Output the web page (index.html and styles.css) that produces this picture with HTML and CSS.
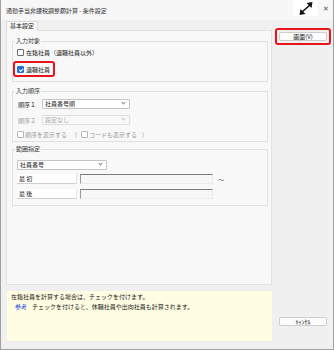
FILE: index.html
```html
<!DOCTYPE html>
<html lang="ja">
<head>
  <meta charset="UTF-8">
  <meta name="viewport" content="width=device-width, initial-scale=1.0">
  <title>条件設定</title>
  <link rel="stylesheet" href="styles.css">
</head>
<body>
  <div class="window">
    <div class="titlebar">
      <span class="title">通勤手当非課税調整額計算 - 条件設定</span>
      <span class="expand">
        <svg width="14" height="13" viewBox="0 0 14 13">
          <line x1="3" y1="10" x2="11" y2="3" stroke="#111" stroke-width="1.6"/>
          <polygon points="13.5,0 7.5,1 12.5,6" fill="#111"/>
          <polygon points="0.5,13 1.5,7 6.5,12" fill="#111"/>
        </svg>
      </span>
      <span class="close">✕</span>
    </div>

    <div class="content">
      <div class="main">
        <div class="tab">基本設定</div>
        <div class="panel">

          <fieldset class="group group-target">
            <legend>入力対象</legend>
            <label class="check"><span class="box"></span>在籍社員（退職社員以外）</label>
            <div class="mark mark-check">
              <label class="check"><span class="box on"></span>退職社員</label>
            </div>
          </fieldset>

          <fieldset class="group group-order">
            <legend>入力順序</legend>
            <div class="row">
              <span class="row-label">順序１</span>
              <div class="select">社員番号順<span class="chev"></span></div>
            </div>
            <div class="row">
              <span class="row-label dim">順序２</span>
              <div class="select disabled">設定なし<span class="chev"></span></div>
            </div>
            <div class="row row-opts dim">
              <span class="box"></span>
              <span class="opt-text">順序を表示する</span>
              <span class="paren-open">(</span>
              <span class="box"></span>
              <span class="opt-text">コードも表示する</span>
              <span class="paren-close">)</span>
            </div>
          </fieldset>

          <fieldset class="group group-range">
            <legend>範囲指定</legend>
            <div class="select select-wide">社員番号<span class="chev"></span></div>
            <div class="range-row">
              <span class="range-label">最 初</span>
              <span class="range-input"></span>
              <span class="tilde">～</span>
            </div>
            <div class="range-row">
              <span class="range-label">最 後</span>
              <span class="range-input"></span>
            </div>
          </fieldset>

        </div>
        <div class="help">
          <p>在籍社員を計算する場合は、チェックを付けます。</p>
          <p class="help-note"><span class="note-tag">参考</span>チェックを付けると、休職社員や出向社員も計算されます。</p>
        </div>
      </div>

      <div class="side">
        <div class="mark">
          <button class="btn">画面(V)</button>
        </div>
        <button class="btn btn-cancel">ｷｬﾝｾﾙ</button>
      </div>
    </div>
  </div>
</body>
</html>
```

FILE: styles.css
```css
* {
  box-sizing: border-box;
}

body {
  margin: 0;
  font-family: "Noto Sans CJK JP", "Noto Sans", sans-serif;
  font-size: 6px;
  color: #222;
  background: #fff;
}

.window {
  width: 334px;
  height: 350px;
  display: flex;
  flex-direction: column;
  background: #f0f0f0;
  border: 1px solid #a0a0a0;
  border-top: none;
}

.titlebar {
  height: 20px;
  display: flex;
  align-items: flex-start;
  background: #f7f7f7;
}

.title {
  flex: 1;
  padding: 7px 0 0 5px;
  line-height: 7px;
  color: #333;
}

.expand {
  width: 25px;
  height: 16px;
  display: flex;
  align-items: center;
  justify-content: center;
  background: #fff;
}

.close {
  width: 15px;
  height: 16px;
  display: flex;
  align-items: center;
  justify-content: center;
  font-size: 7px;
  color: #555;
}

.content {
  flex: 1;
  display: flex;
}

.main {
  width: 266px;
  margin-left: 5px;
  display: flex;
  flex-direction: column;
}

.tab {
  position: relative;
  z-index: 1;
  width: 32px;
  height: 10px;
  margin-top: 1px;
  margin-bottom: -1px;
  line-height: 8px;
  text-align: center;
  background: #f8f8f8;
  border: 1px solid #dcdcdc;
  border-bottom: none;
}

.panel {
  height: 255px;
  padding: 6px 3px 0 5px;
  background: #f8f8f8;
  border: 1px solid #e2e2e2;
}

.group {
  margin: 0;
  padding: 0 4px;
  min-width: 0;
  border: 1px solid #e0e0e0;
}

.group legend {
  margin-left: -2px;
  padding: 0 1px;
  line-height: 8px;
  color: #333;
}

.group-target {
  padding-top: 2px;
  padding-bottom: 4px;
}

.group-order {
  margin-top: 5px;
  padding-top: 4px;
  padding-bottom: 2px;
}

.group-range {
  margin-top: 3px;
  padding-top: 7px;
  padding-bottom: 6px;
}

.check {
  display: flex;
  align-items: center;
  gap: 2px;
  height: 10px;
}

.box {
  width: 7px;
  height: 7px;
  flex: none;
  background: #fff;
  border: 1px solid #6a6a6a;
  border-radius: 1px;
}

.box.on {
  background: #1f6fd2;
  border-color: #1f6fd2;
  position: relative;
}

.box.on::after {
  content: "";
  position: absolute;
  left: 1px;
  top: 0;
  width: 3px;
  height: 2px;
  border-left: 1px solid #fff;
  border-bottom: 1px solid #fff;
  transform: translate(0, 1px) rotate(-45deg);
}

.mark {
  width: fit-content;
  border: 2px solid #e8141c;
  border-radius: 3px;
  padding: 2px;
}

.mark-check {
  margin: 4px 0 0 -4px;
  padding: 1px 3px 1px 2px;
}

.row {
  display: flex;
  align-items: center;
  height: 10px;
  margin-top: 6px;
}

.group-order .row:first-of-type {
  margin-top: 0;
}

.row-label {
  width: 25px;
  padding-left: 1px;
}

.dim {
  color: #9a9a9a;
}

.dim .box {
  border-color: #b8b8b8;
}

.select {
  position: relative;
  width: 88px;
  height: 10px;
  padding-left: 2px;
  line-height: 8px;
  background: #fff;
  border: 1px solid #c4c4c4;
  border-radius: 1px;
}

.select.disabled {
  color: #aaa;
  background: #f8f8f8;
  border-color: #dedede;
}

.chev {
  position: absolute;
  right: 4px;
  top: 1px;
  width: 3px;
  height: 3px;
  border-right: 1px solid #888;
  border-bottom: 1px solid #888;
  transform: rotate(45deg);
}

.disabled .chev {
  border-color: #c8c8c8;
}

.row-opts {
  margin-top: 4px;
}

.row-opts .box + .opt-text {
  margin-left: 1px;
}

.paren-open {
  margin: 0 4px 0 8px;
}

.paren-close {
  margin-left: 5px;
}

.select-wide {
  width: 90px;
}

.range-row {
  display: flex;
  align-items: center;
  height: 10px;
  margin-top: 4px;
}

.range-row + .range-row {
  margin-top: 5px;
}

.range-label {
  width: 60px;
  height: 10px;
  padding-left: 2px;
  line-height: 9px;
  background: #fff;
  border-bottom: 1px solid #cfcfcf;
  border-right: 1px solid #e6e6e6;
}

.range-input {
  width: 133px;
  height: 10px;
  margin-left: 3px;
  background: #f7f7f7;
  border-top: 1px solid #7c7c7c;
  border-left: 1px solid #9a9a9a;
  border-right: 1px solid #ececec;
  border-bottom: 1px solid #ececec;
}

.tilde {
  margin-left: 5px;
  color: #666;
}

.help {
  height: 50px;
  margin-top: 6px;
  margin-left: 1px;
  padding: 1px 4px;
  background: #fffde2;
}

.help p {
  margin: 0;
  line-height: 9.5px;
}

.help-note {
  padding-left: 4px;
}

.note-tag {
  margin-right: 5px;
  color: #2247d8;
}

.side {
  display: flex;
  flex-direction: column;
  align-items: flex-start;
  margin-left: 3px;
  padding-top: 8px;
  padding-bottom: 23px;
}

.btn {
  width: 48px;
  height: 9px;
  padding: 0;
  font-family: inherit;
  font-size: 6px;
  line-height: 7px;
  color: #222;
  background: #fcfcfc;
  border: 1px solid #cdcdcd;
  border-radius: 2px;
}

.btn-cancel {
  margin-top: auto;
  margin-left: 4px;
}
```
